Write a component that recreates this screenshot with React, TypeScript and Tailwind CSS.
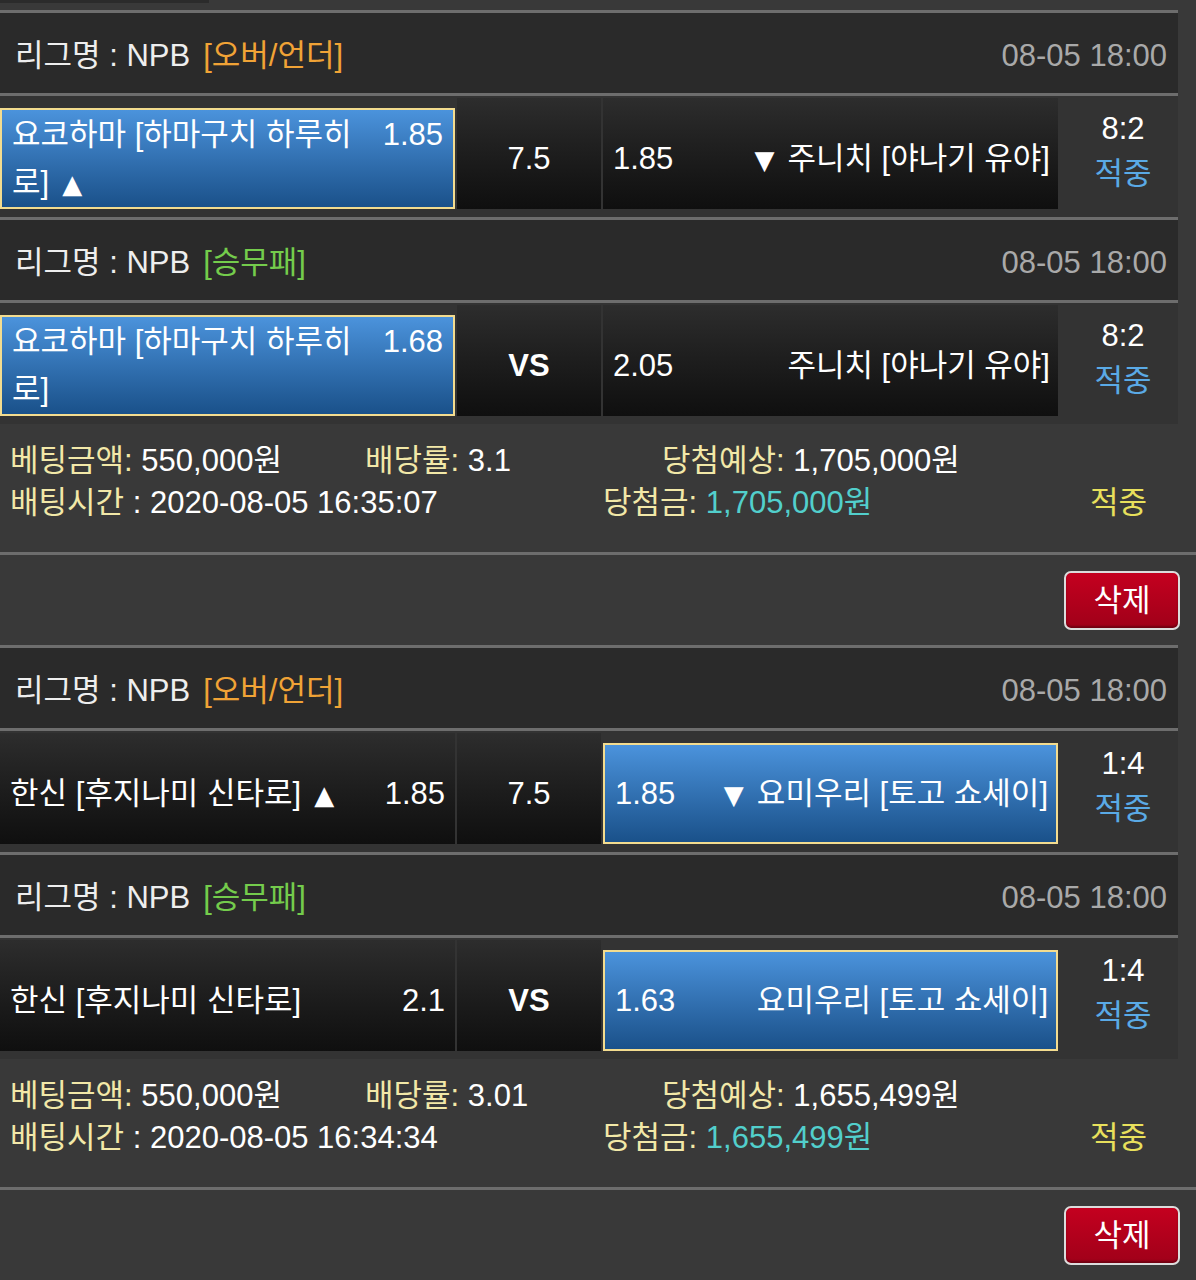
import React from "react";

type Match = {
  type: "ou" | "wdl";
  home: string;
  homeOdds: string;
  mid: string;
  away: string;
  awayOdds: string;
  pick: "home" | "away";
  score: string;
};

type Bet = {
  matches: Match[];
  amount: string;
  rate: string;
  expected: string;
  time: string;
  prize: string;
};

const bets: Bet[] = [
  {
    matches: [
      {
        type: "ou",
        home: "요코하마 [하마구치 하루히 로]",
        homeOdds: "1.85",
        mid: "7.5",
        away: "주니치 [야나기 유야]",
        awayOdds: "1.85",
        pick: "home",
        score: "8:2",
      },
      {
        type: "wdl",
        home: "요코하마 [하마구치 하루히 로]",
        homeOdds: "1.68",
        mid: "VS",
        away: "주니치 [야나기 유야]",
        awayOdds: "2.05",
        pick: "home",
        score: "8:2",
      },
    ],
    amount: "550,000원",
    rate: "3.1",
    expected: "1,705,000원",
    time: "2020-08-05 16:35:07",
    prize: "1,705,000원",
  },
  {
    matches: [
      {
        type: "ou",
        home: "한신 [후지나미 신타로]",
        homeOdds: "1.85",
        mid: "7.5",
        away: "요미우리 [토고 쇼세이]",
        awayOdds: "1.85",
        pick: "away",
        score: "1:4",
      },
      {
        type: "wdl",
        home: "한신 [후지나미 신타로]",
        homeOdds: "2.1",
        mid: "VS",
        away: "요미우리 [토고 쇼세이]",
        awayOdds: "1.63",
        pick: "away",
        score: "1:4",
      },
    ],
    amount: "550,000원",
    rate: "3.01",
    expected: "1,655,499원",
    time: "2020-08-05 16:34:34",
    prize: "1,655,499원",
  },
];

const Line = () => <div className="h-[3px] bg-[#6d6d6d]" />;

const darkCell = "bg-linear-to-b from-[#2d2d2d] to-[#0f0f0f] h-[111px] pt-[10px]";
const blueCell =
  "bg-linear-to-b from-[#4b93dc] to-[#1a518a] border-2 border-[#f3dc8f] h-[101px]";

const arrowFont = { fontFamily: '"DejaVu Sans", sans-serif' };

function Header({ type }: { type: Match["type"] }) {
  return (
    <div className="h-[80px] bg-[#2a2a2a] flex items-center justify-between pl-[15px] pr-[11px] pt-[6px]">
      <div className="text-[#eeeeee]">
        리그명 : NPB
        {type === "ou" ? (
          <span className="ml-[13px] text-[#f0a336]">[오버/언더]</span>
        ) : (
          <span className="ml-[13px] text-[#74cc4c]">[승무패]</span>
        )}
      </div>
      <div className="text-[#a9a9a9]">08-05 18:00</div>
    </div>
  );
}

function Row({ m }: { m: Match }) {
  const homeSel = m.pick === "home";
  const awaySel = m.pick === "away";
  const ou = m.type === "ou";
  return (
    <div className="flex items-end gap-[2px] pt-[2px] pb-[8px] h-[121px]">
      <div
        className={`w-[455px] flex items-center pl-[10px] pr-[10px] text-white ${
          homeSel ? blueCell : darkCell
        }`}
      >
        <div className="flex w-full items-start justify-between">
          <div className="w-[345px] leading-[48px]">
            {m.home}
            {ou && (
              <span className="ml-[13px] inline-block text-[26px] leading-[26px]" style={arrowFont}>
                ▲
              </span>
            )}
          </div>
          <div className="shrink-0 leading-[48px]">{m.homeOdds}</div>
        </div>
      </div>
      <div
        className={`${darkCell} w-[144px] flex items-center justify-center text-white ${
          m.mid === "VS" ? "font-bold" : ""
        }`}
      >
        {m.mid}
      </div>
      <div
        className={`w-[455px] flex items-center justify-between pl-[10px] pr-[8px] text-white ${
          awaySel ? blueCell : darkCell
        }`}
      >
        <div className="shrink-0">{m.awayOdds}</div>
        <div className="text-right">
          {ou && (
            <span className="mr-[13px] inline-block text-[26px] leading-[26px]" style={arrowFont}>
              ▼
            </span>
          )}
          {m.away}
        </div>
      </div>
      <div className="flex-1 h-[111px] flex flex-col items-center justify-center pl-[8px] leading-[45px] pb-[6px]">
        <div className="text-white">{m.score}</div>
        <div className="text-[#5aaae6]">적중</div>
      </div>
    </div>
  );
}

function BetBlock({ bet }: { bet: Bet }) {
  return (
    <div>
      <div className="w-[1178px] bg-[#333333]">
        {bet.matches.map((m, i) => (
          <div key={i}>
            <Line />
            <Header type={m.type} />
            <Line />
            <Row m={m} />
          </div>
        ))}
      </div>
      <div className="pl-[10px] pt-[16px] pb-[28px] leading-[42px]">
        <div className="flex">
          <div className="w-[355px]">
            <span className="text-[#f2e8a8]">베팅금액:</span>
            <span className="text-white"> {bet.amount}</span>
          </div>
          <div className="w-[297px]">
            <span className="text-[#f2e8a8]">배당률:</span>
            <span className="text-white"> {bet.rate}</span>
          </div>
          <div>
            <span className="text-[#f2e8a8]">당첨예상:</span>
            <span className="text-white"> {bet.expected}</span>
          </div>
        </div>
        <div className="flex">
          <div className="w-[593px]">
            <span className="text-[#f2e8a8]">배팅시간</span>
            <span className="text-white"> : {bet.time}</span>
          </div>
          <div className="w-[487px]">
            <span className="text-[#f2e8a8]">당첨금:</span>
            <span className="text-[#52cfcc]"> {bet.prize}</span>
          </div>
          <div className="text-[#e8e05c]">적중</div>
        </div>
      </div>
      <div className="h-[3px] bg-[#6d6d6d]" />
      <div className="h-[90px] flex justify-end items-start pt-[16px] pr-[16px]">
        <button className="w-[116px] h-[59px] rounded-[7px] border-2 border-[#dcdcdc] bg-linear-to-b from-[#c4001f] to-[#a00019] text-white flex items-center justify-center shadow-[inset_0_-2px_2px_rgba(0,0,0,0.3)]">
          삭제
        </button>
      </div>
    </div>
  );
}

export default function App() {
  return (
    <div
      className="w-[1196px] h-[1280px] overflow-hidden bg-[#393939] text-[31px] leading-[42px]"
      style={{ fontFamily: '"Liberation Sans", "Noto Sans CJK KR", sans-serif' }}
    >
      <div className="h-[3px] w-[209px] bg-[#2b2b2b]" />
      <div className="h-[7px]" />
      {bets.map((b, i) => (
        <BetBlock key={i} bet={b} />
      ))}
    </div>
  );
}
